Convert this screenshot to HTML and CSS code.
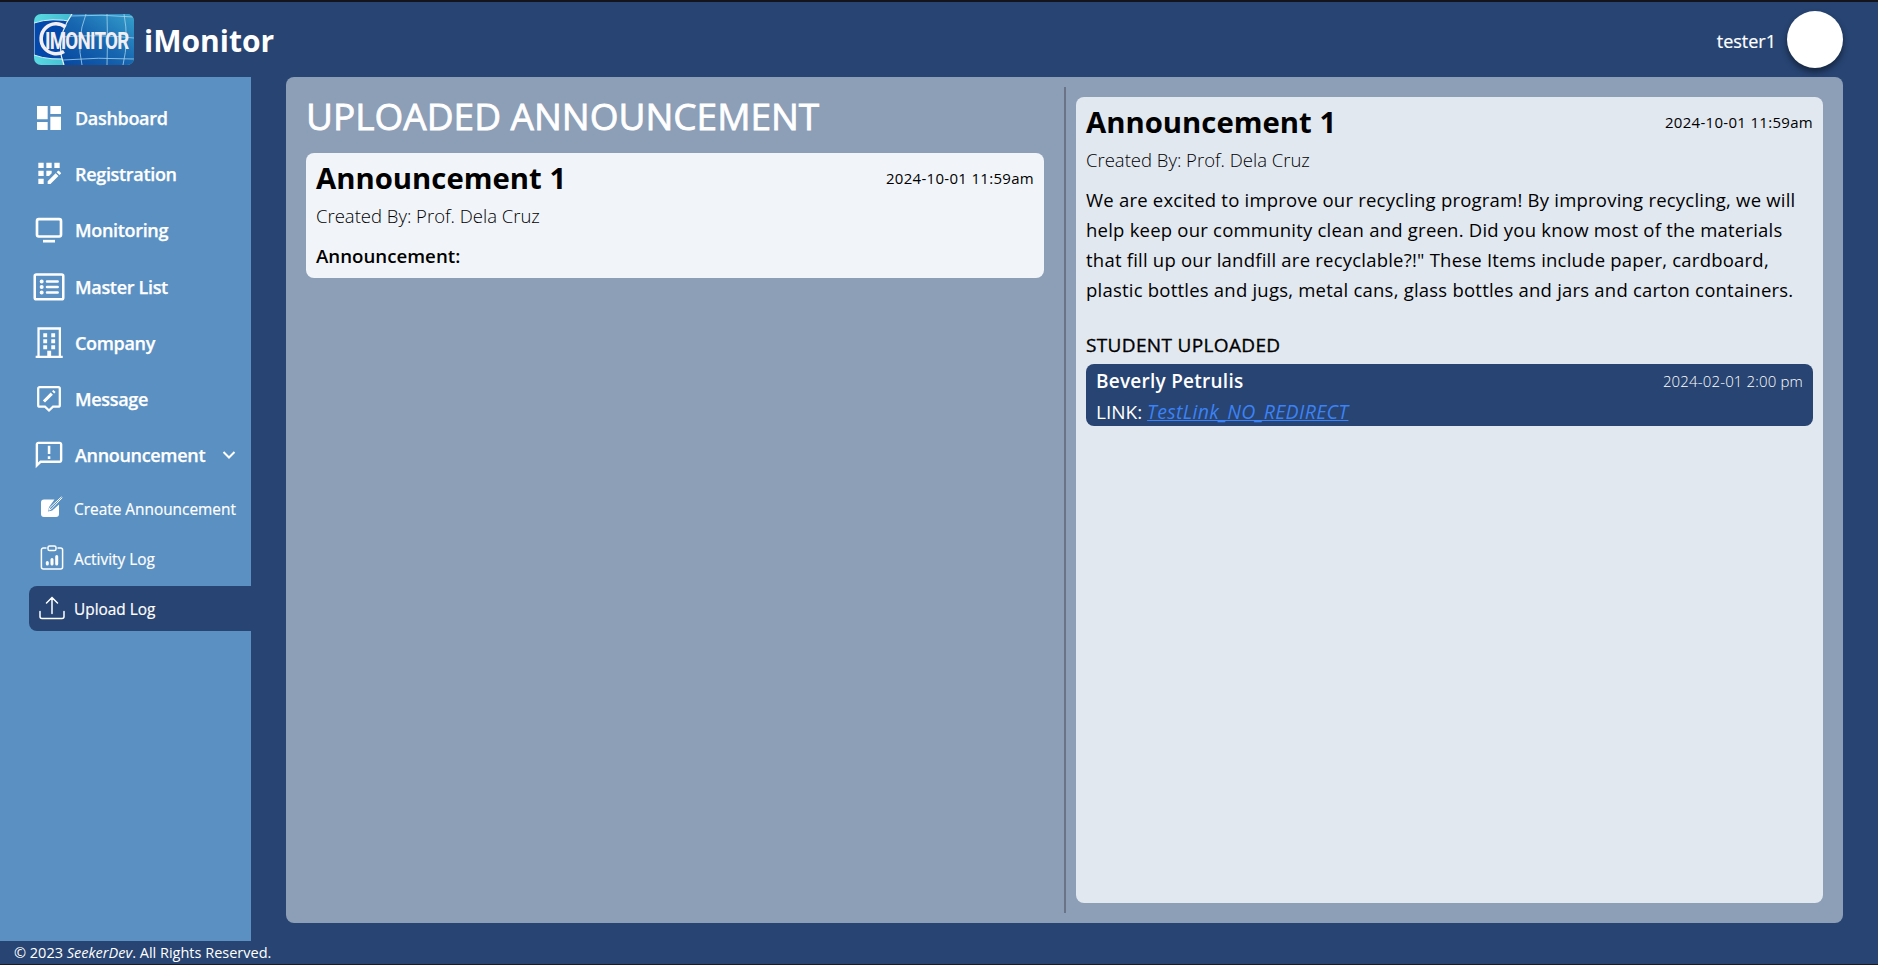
FILE: index.html
```
<!DOCTYPE html>
<html lang="en">
<head>
<meta charset="utf-8">
<title>iMonitor</title>
<link rel="stylesheet" href="styles.css">
</head>
<body>
<div class="app">
  <header class="topbar">
    <svg class="logo" viewBox="0 0 100 51">
      <defs>
        <linearGradient id="sky" x1="0" y1="0" x2="1" y2="0"><stop offset="0" stop-color="#5adbe2"/><stop offset=".4" stop-color="#3fb9d0"/><stop offset="1" stop-color="#45b4d6"/></linearGradient>
        <linearGradient id="globe" x1="0" y1="1" x2="1" y2="0"><stop offset="0" stop-color="#0646a0"/><stop offset=".5" stop-color="#1766b0"/><stop offset="1" stop-color="#35a0cc"/></linearGradient>
      </defs>
      <rect width="100" height="51" fill="url(#sky)"/>
      <path d="M0 9Q18 3 40 8V44Q16 47 0 41Z" fill="#0548ab" stroke="#d9f3fa" stroke-width="1"/>
      <path d="M38 0Q20 26 30 51H100V0Z" fill="url(#globe)"/>
      <g fill="none" stroke="#a5d3ea" stroke-width=".8">
        <path d="M38 0Q20 26 30 51" stroke="#e9f6fc" stroke-width="1.200"/>
        <path d="M52 0Q42 26 48 51M73 0Q74 26 73 51M90 0Q95 26 89 51M36 2Q68 0 100 3M28 23Q64 20 100 24M29 46Q64 43 100 45"/>
      </g>
      <path d="M31.500 13A15 15 0 1 0 30 37.500" fill="none" stroke="#f2eef2" stroke-width="3.600"/>
      <text class="logo-word" transform="scale(.78 1)" x="14" y="35.200" textLength="108">IMONITOR</text>
    </svg>
    <span class="brand">iMonitor</span>
    <span class="user">tester1</span>
    <span class="avatar"></span>
  </header>

  <div class="body">
    <nav class="sidebar">
      <a class="item"><svg viewBox="0 0 24 24"><path d="M3 13h8V3H3v10zm0 8h8v-6H3v6zm10 0h8V11h-8v10zm0-18v6h8V3h-8z"/></svg><span>Dashboard</span></a>
      <a class="item"><svg viewBox="0 0 24 24"><path d="M10 3.500h4v4h-4zM4 15.500h4v4H4zM4 9.500h4v4H4zM4 3.500h4v4H4zM16 3.500h4v4h-4zM11 17.360v2.140h2.100l5.980-5.970-2.120-2.120zM14 11.530V9.500h-4v4h2.030zM20.850 11.060l-1.410-1.410a.5.5 0 0 0-.71 0l-1.060 1.060 2.120 2.120 1.060-1.060a.5.5 0 0 0 0-.71z"/></svg><span>Registration</span></a>
      <a class="item"><svg viewBox="0 0 24 24" class="line"><rect x="3" y="3.900" width="18" height="13" rx="1.300" stroke-width="2"/><path d="M7.500 20.400h9" stroke-width="2"/></svg><span>Monitoring</span></a>
      <a class="item"><svg viewBox="0 0 24 24" class="line"><rect x="1.300" y="2.600" width="21.400" height="18.600" rx="1.200" stroke-width="1.900"/><path d="M10.500 7.800h8M10.500 12h8M10.500 16.200h8" stroke-width="1.900" stroke-linecap="round"/><path d="M6.500 7.800h.01M6.500 12h.01M6.500 16.200h.01" stroke-width="3" stroke-linecap="round"/></svg><span>Master List</span></a>
      <a class="item"><svg viewBox="0 0 24 24"><path fill-rule="evenodd" d="M3.300.200h17.700v21.300h1.300v1.700H2v-1.700h1.300zM5 2v19.500h5.700v-3.600h2.900v3.600h5.700V2z"/><path d="M7.700 4.700h2.900v2.900H7.700zM13.700 4.700h2.900v2.900h-2.900zM7.700 9.200h2.900v2.900H7.700zM13.700 9.200h2.900v2.900h-2.900zM7.700 13.700h2.900v2.900H7.700zM13.700 13.700h2.900v2.900h-2.900z"/></svg><span>Company</span></a>
      <a class="item"><svg viewBox="0 0 24 24" class="line"><path d="M5 3.100h14a1.100 1.100 0 0 1 1.100 1.100v12.500a1.100 1.100 0 0 1-1.100 1.100h-4L12 20.600l-3-2.800H5a1.100 1.100 0 0 1-1.100-1.100V4.200A1.100 1.100 0 0 1 5 3.100z" stroke-width="1.700"/><path d="M8.200 13.900l5.900-5.900M15.100 7l1-1" stroke-width="2.300"/></svg><span>Message</span></a>
      <a class="item last"><svg viewBox="0 0 24 24"><path fill-rule="evenodd" d="M20 2H4c-1.100 0-1.990.9-1.990 2L2 22l4-4h14c1.100 0 2-.9 2-2V4c0-1.100-.9-2-2-2zm.2 14.200H5.300L3.800 17.700V3.800h16.400zM11.100 5h1.900v6.200h-1.900zM11.100 13h1.900v2h-1.900z"/></svg><span>Announcement</span><svg class="chevron line" viewBox="0 0 14 14"><path d="M1.500 4L7 9.500 12.500 4" stroke-width="2"/></svg></a>
      <a class="sub"><svg viewBox="0 0 26 26"><path d="M15.500 4.500H5a3 3 0 0 0-3 3V19a3 3 0 0 0 3 3h12a3 3 0 0 0 3-3V9.500l-6.800 6.100-4.300.9 1.200-4.400z"/><path d="M22.500 1.800L11 12.500l-1.200 2.700 2.600-1.200L23.300 2.600" fill="none" stroke="#fff" stroke-width="1"/></svg><span>Create Announcement</span></a>
      <a class="sub"><svg viewBox="0 0 26 26" class="line"><path d="M7.500 3H4.400a2 2 0 0 0-2 2v17a2 2 0 0 0 2 2h17.200a2 2 0 0 0 2-2V5a2 2 0 0 0-2-2h-3.100" stroke-width="1.500"/><rect x="9" y="1" width="8" height="4.500" rx="1.600" stroke-width="1.500"/><path d="M8.300 17.500v1.500M13 14.500v4.500M17.700 11.500v7.500" stroke-width="3" stroke-linecap="round"/></svg><span>Activity Log</span></a>
      <a class="sub active"><svg viewBox="0 0 26 26" class="line"><path d="M1 16.500v5a2 2 0 0 0 2 2h20a2 2 0 0 0 2-2v-5M13 18.500V3M7.500 8L13 2.500 18.500 8" stroke-width="1.500" stroke-linecap="round"/></svg><span>Upload Log</span></a>
    </nav>

    <main class="panel">
      <section class="list">
        <h1>UPLOADED ANNOUNCEMENT</h1>
        <article class="card">
          <div class="row"><h2>Announcement 1</h2><time>2024-10-01 11:59am</time></div>
          <p class="author">Created By: Prof. Dela Cruz</p>
          <p class="label">Announcement:</p>
        </article>
      </section>
      <section class="detail">
        <div class="row"><h2>Announcement 1</h2><time>2024-10-01 11:59am</time></div>
        <p class="author">Created By: Prof. Dela Cruz</p>
        <p class="text">We are excited to improve our recycling program! By improving recycling, we will<br>help keep our community clean and green. Did you know most of the materials<br>that fill up our landfill are recyclable?!" These Items include paper, cardboard,<br>plastic bottles and jugs, metal cans, glass bottles and jars and carton containers.</p>
        <h3>STUDENT UPLOADED</h3>
        <div class="upload">
          <div class="row"><strong>Beverly Petrulis</strong><time>2024-02-01 2:00 pm</time></div>
          <p class="link">LINK: <a>TestLink_NO_REDIRECT</a></p>
        </div>
      </section>
    </main>
  </div>
  <footer class="footer">© 2023 <i>SeekerDev</i>. All Rights Reserved.</footer>
</div>
</body>
</html>
```
FILE: styles.css
```
* { box-sizing: border-box; margin: 0; padding: 0; }

body {
  font-family: "Open Sans", "Noto Sans", sans-serif;
  background: #274472;
  color: #fff;
  overflow: hidden;
}

.app {
  height: 965px;
  display: flex;
  flex-direction: column;
  border-top: 2px solid #14141c;
  border-bottom: 1px solid #1b1b26;
}

svg { display: block; fill: #fff; flex: none; }
svg.line { fill: none; stroke: #fff; }

.topbar {
  height: 75px;
  flex: none;
  display: flex;
  align-items: center;
  padding: 0 35px 0 34px;
}
.logo { width: 100px; height: 51px; border-radius: 7px; }
.logo-word { fill: #f2eef2; font: 700 24px Roboto, sans-serif; }
.brand { margin: 2px 0 0 10px; font-size: 30px; font-weight: 700; }
.user { margin: 2px 0 0 auto; font-size: 18px; -webkit-text-stroke: .2px currentColor; }
.avatar {
  width: 56px;
  height: 57px;
  margin-left: 11px;
  border-radius: 50%;
  background: #fff;
  box-shadow: 0 4px 6px rgba(0, 0, 0, .45);
}

.body { flex: 1; min-height: 0; display: flex; }

.sidebar {
  width: 251px;
  flex: none;
  background: #5a90c2;
  padding: 18px 0 0 29px;
}
.item {
  height: 46.2px;
  margin-bottom: 10px;
  display: flex;
  align-items: center;
  padding-left: 4px;
  font-size: 18px;
  font-weight: 600;
  letter-spacing: -.32px;
  -webkit-text-stroke: .25px currentColor;
}
.item.last { margin-bottom: 7.6px; }
.item svg { width: 32px; height: 32px; margin-right: 10px; }
.item .chevron { width: 14px; height: 14px; margin: 0 0 0 17px; }
.sub {
  height: 45px;
  margin-bottom: 5px;
  display: flex;
  align-items: center;
  padding-left: 9.5px;
  font-size: 15.4px;
  border-radius: 8px 0 0 8px;
  -webkit-text-stroke: .2px currentColor;
}
.sub svg { width: 26px; height: 26px; margin-right: 9.5px; }
.sub span { padding-top: 2px; }
.active { background: #274472; }

.panel {
  flex: 1;
  margin: 0 35px 18px;
  padding: 10px 20px;
  display: flex;
  border-radius: 8px;
  background: #8d9eb7;
}
.list {
  width: 760px;
  padding-right: 20px;
  border-right: 2px solid #6b7386;
}
h1 {
  height: 66px;
  line-height: 57px;
  font-size: 37px;
  font-weight: 400;
  white-space: nowrap;
  -webkit-text-stroke: .8px currentColor;
}
.card {
  height: 125px;
  padding: 4px 10px;
  border-radius: 8px;
  background: #f1f5f9;
  color: #000;
}
.row { display: flex; justify-content: space-between; align-items: center; height: 41px; }
h2 { font-size: 29.3px; font-weight: 700; white-space: nowrap; }
time { font-size: 15px; letter-spacing: .3px; }
.author { font-size: 18.5px; font-weight: 300; line-height: 35px; }
.label { font-size: 18.7px; font-weight: 600; line-height: 46px; }
.detail {
  flex: 1;
  margin: 10px 0 10px 10px;
  padding: 4px 10px;
  border-radius: 8px;
  background: #e2e8f0;
  color: #000;
}
.text { margin-top: 8px; font-size: 18.5px; line-height: 30px; letter-spacing: .22px; white-space: nowrap; }
h3 {
  margin-top: 22px;
  font-size: 19px;
  font-weight: 400;
  line-height: 37px;
  letter-spacing: .35px;
  -webkit-text-stroke: .35px currentColor;
}
.upload {
  height: 62px;
  padding: 0 10px;
  border-radius: 8px;
  background: #274472;
  color: #fff;
}
.upload .row { height: 34px; }
.upload strong { font-size: 19px; font-weight: 600; letter-spacing: .25px; }
.upload time { font-weight: 300; letter-spacing: .15px; }
.link { font-size: 19px; line-height: 28px; }
.link a { font-size: 19.5px; font-style: italic; letter-spacing: .35px; color: #3b82f6; text-decoration: underline; }

.footer { height: 23px; padding-left: 14px; font-size: 14.5px; line-height: 23px; }
```
